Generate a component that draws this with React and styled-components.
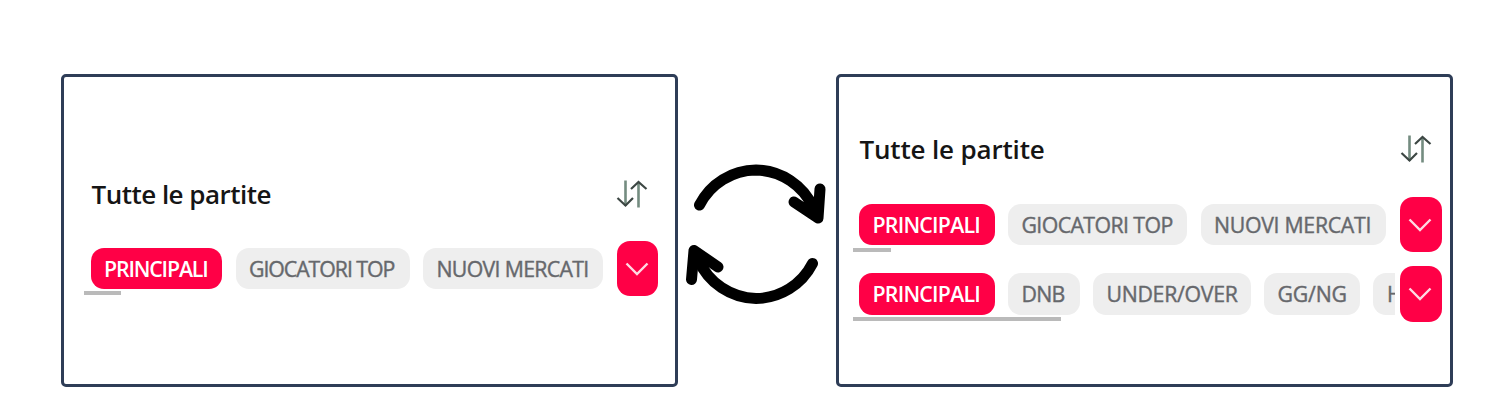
import React from 'react'
import styled, { createGlobalStyle } from 'styled-components'

const GlobalStyle = createGlobalStyle`
  body {
    margin: 0;
    background: #fff;
    overflow: hidden;
  }
`

const Page = styled.div`
  box-sizing: border-box;
  width: 1500px;
  height: 404px;
  padding: 74px 0 0 61px;
  display: flex;
  align-items: flex-start;
  font-family: 'Open Sans', 'Noto Sans', sans-serif;
`

const Panel = styled.section`
  box-sizing: border-box;
  width: 617px;
  height: 313px;
  flex: none;
  border: 3px solid #2e3d57;
  border-radius: 5px;
  padding: ${p => p.$pad};
`

const Header = styled.div`
  display: flex;
  justify-content: space-between;
  align-items: center;
  height: 40px;
  padding: ${p => p.$pad};
`

const Title = styled.h2`
  margin: 0;
  color: #151515;
  font-size: 26px;
  line-height: 40px;
  font-weight: 600;
  white-space: nowrap;
  letter-spacing: ${p => p.$track}px;
`

const Row = styled.div`
  display: flex;
  align-items: flex-start;
  height: ${p => p.$height}px;
  margin-top: ${p => p.$top}px;
`

const Scroller = styled.div`
  width: ${p => p.$width}px;
  flex: none;
  overflow: hidden;
  padding-top: 7px;
`

const Chips = styled.div`
  display: flex;
  gap: 13.5px;
  padding-left: 6.6px;
`

const Chip = styled.div`
  box-sizing: border-box;
  flex: none;
  width: ${p => p.$width}px;
  height: ${p => p.$height}px;
  line-height: ${p => p.$height}px;
  padding-left: ${p => p.$inset || 13.4}px;
  border-radius: 13px;
  white-space: nowrap;
  font-size: 21.3px;
  font-weight: ${p => (p.$active ? 600 : 400)};
  letter-spacing: ${p => p.$track}px;
  color: ${p => (p.$active ? '#fff' : '#66686c')};
  -webkit-text-stroke: ${p => (p.$active ? 0 : 0.4)}px #66686c;
  background: ${p => (p.$active ? '#ff0046' : '#eee')};
`

const Thumb = styled.div`
  width: ${p => p.$width}px;
  height: 4px;
  margin-top: ${p => p.$top}px;
  background: #bababa;
`

const Toggle = styled.button`
  width: ${p => p.$width}px;
  height: ${p => p.$height}px;
  flex: none;
  padding: 0;
  margin-left: ${p => p.$left}px;
  border: 0;
  border-radius: 13px;
  background: #ff0046;
  display: flex;
  align-items: center;
  justify-content: center;
`

const Swap = styled.svg`
  flex: none;
  width: 158px;
  height: 160px;
  margin-top: 81px;
`

function SortIcon() {
  return (
    <svg width="32" height="30" viewBox="0 0 32 30" fill="none">
      <path d="M9.5 1.5V27M22.5 3V28.5" stroke="#748c80" strokeWidth="2.6" />
      <path d="M1.5 19L9.5 26.5L17 19M15 10L22.5 3L30.5 10" stroke="#3d4744" strokeWidth="2.2" />
    </svg>
  )
}

function ChipRow({ chips, top, height, chipHeight, scroller, thumb, thumbTop, toggle }) {
  return (
    <Row $top={top} $height={height}>
      <Scroller $width={scroller}>
        <Chips>
          {chips.map((c, i) => (
            <Chip
              key={c.label}
              $active={i === 0}
              $width={c.width}
              $height={chipHeight}
              $track={c.track}
              $inset={c.inset}
            >
              {c.label}
            </Chip>
          ))}
        </Chips>
        <Thumb $width={thumb} $top={thumbTop} />
      </Scroller>
      <Toggle $width={toggle.width} $height={height} $left={toggle.left}>
        <svg width="26" height="16" viewBox="0 0 26 16" fill="none">
          <path d="M1.5 2.5L12 13L22.5 2.5" stroke="#ffd9e3" strokeWidth="2.4" />
        </svg>
      </Toggle>
    </Row>
  )
}

const single = [
  { label: 'PRINCIPALI', width: 131.5, track: -1.15 },
  { label: 'GIOCATORI TOP', width: 174, track: -1.05 },
  { label: 'NUOVI MERCATI', width: 180, track: -0.68 },
]

const markets = [
  { label: 'PRINCIPALI', width: 135.5, track: -0.75 },
  { label: 'GIOCATORI TOP', width: 179, track: -0.6 },
  { label: 'NUOVI MERCATI', width: 185.5, track: -0.3 },
]

const bets = [
  { label: 'PRINCIPALI', width: 135.5, track: -0.75 },
  { label: 'DNB', width: 71.5, track: -0.7 },
  { label: 'UNDER/OVER', width: 157.5, track: -0.3 },
  { label: 'GG/NG', width: 95.5, track: -0.2 },
  { label: 'H', width: 130, track: 0, inset: 14 },
]

function App() {
  return (
    <>
      <GlobalStyle />
      <Page>
        <Panel $pad="97px 0 0 20px">
          <Header $pad="0 27px 0 7.5px">
            <Title $track={-0.52}>Tutte le partite</Title>
            <SortIcon />
          </Header>
          <ChipRow
            chips={single}
            top={27}
            height={55}
            chipHeight={41}
            scroller={520}
            thumb={37}
            thumbTop={2}
            toggle={{ width: 41, left: 13 }}
          />
        </Panel>
        <Swap viewBox="678 155 158 160" fill="none" stroke="#000" strokeWidth="11" strokeLinecap="round" strokeLinejoin="round">
          <path d="M699.5 205A64 64 0 0 1 756 170A64 64 0 0 1 813.5 208" />
          <path d="M820 189L818 218L794 202M818 218L809 203" />
          <path d="M812.5 263.5A64 64 0 0 1 756 298.5A64 64 0 0 1 698.5 260" />
          <path d="M691.5 279.5L694 250.5L718 267M694 250.5L703 266" />
        </Swap>
        <Panel $pad="52px 0 0 13.5px">
          <Header $pad="0 18.5px 0 7px">
            <Title $track={-0.17}>Tutte le partite</Title>
            <SortIcon />
          </Header>
          <ChipRow
            chips={markets}
            top={28}
            height={55}
            chipHeight={41}
            scroller={542.5}
            thumb={38.5}
            thumbTop={3}
            toggle={{ width: 42, left: 4.6 }}
          />
          <ChipRow
            chips={bets}
            top={14}
            height={56}
            chipHeight={42}
            scroller={542.5}
            thumb={208}
            thumbTop={2}
            toggle={{ width: 42, left: 4.6 }}
          />
        </Panel>
      </Page>
    </>
  )
}

export default App
